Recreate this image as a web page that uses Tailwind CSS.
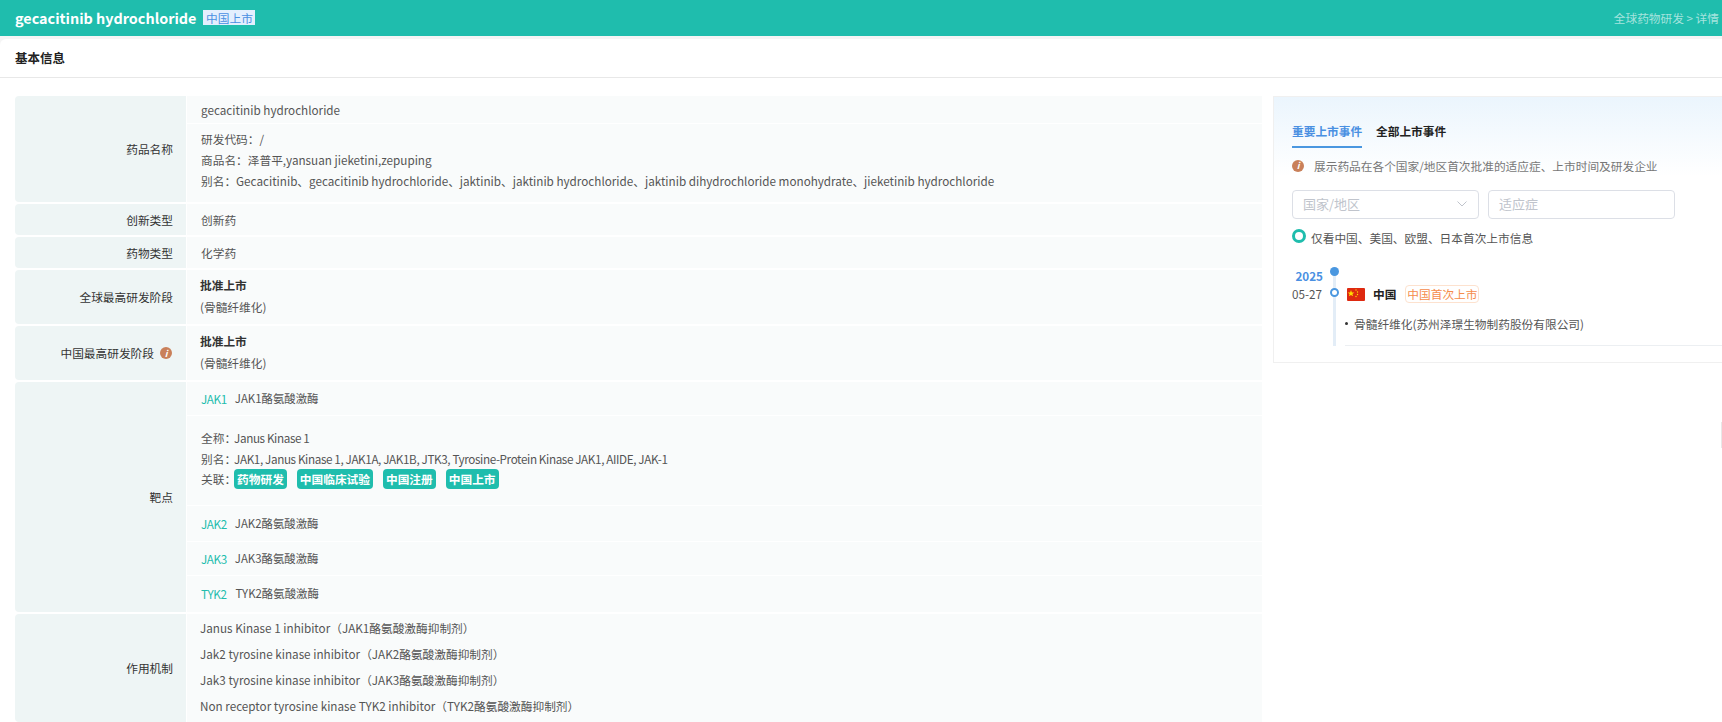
<!doctype html>
<html>

<head>
    <meta charset="UTF-8">
    <meta name="viewport" content="width=device-width, initial-scale=1.0">
    <script src="https://cdn.jsdelivr.net/npm/@tailwindcss/browser@4"></script>
</head>

<body class="relative h-[722px] overflow-hidden bg-[#f5f5f5] font-['Noto_Sans_CJK_SC','Noto_Sans',sans-serif] text-[11.7px] text-[#555]">
    <!-- top bar -->
    <header class="h-9 bg-[#1fbdad] flex items-center justify-between pl-[15px] pr-[3px]">
        <div class="flex items-center">
            <h1 class="text-[14.4px] font-bold text-white">gecacitinib hydrochloride</h1>
            <span class="ml-[7px] h-[15px] w-[52px] bg-[#e3effe] text-[#4a90e2] flex items-center justify-center leading-none">中国上市</span>
        </div>
        <div class="text-white/60">全球药物研发 &gt; 详情</div>
    </header>

    <main class="mt-[3px] h-[683px] bg-white rounded-tl-md overflow-hidden">
        <div class="h-[39px] border-b border-[#e8e8e8] pl-[15px] flex items-center text-[12.5px] font-bold text-[#222]">基本信息</div>

        <div class="flex pt-[18px] pl-[15px]">
            <!-- basic info table -->
            <div class="w-[1247px] flex flex-col gap-[2px]">
                <div class="flex h-[106px]">
                    <div class="w-[171px] bg-[#eef5f5] rounded-l flex items-center justify-end pr-[13px] text-[#333]">药品名称</div>
                    <div class="flex-1 bg-[#f9fbfb] ml-px">
                        <div class="h-7 border-b border-white pl-[14px] flex items-center">gecacitinib hydrochloride</div>
                        <div class="pl-[14px] pt-[4px] leading-[21px]">
                            <p>研发代码：/</p>
                            <p>商品名：泽普平,yansuan jieketini,zepuping</p>
                            <p>别名：Gecacitinib、gecacitinib hydrochloride、jaktinib、jaktinib hydrochloride、jaktinib dihydrochloride monohydrate、jieketinib hydrochloride</p>
                        </div>
                    </div>
                </div>
                <div class="flex h-[31px]">
                    <div class="w-[171px] bg-[#eef5f5] rounded-l flex items-center justify-end pr-[13px] text-[#333]">创新类型</div>
                    <div class="flex-1 bg-[#f9fbfb] ml-px pl-[14px] flex items-center">创新药</div>
                </div>
                <div class="flex h-[31px]">
                    <div class="w-[171px] bg-[#eef5f5] rounded-l flex items-center justify-end pr-[13px] text-[#333]">药物类型</div>
                    <div class="flex-1 bg-[#f9fbfb] ml-px pl-[14px] flex items-center">化学药</div>
                </div>
                <div class="flex h-[54px]">
                    <div class="w-[171px] bg-[#eef5f5] rounded-l flex items-center justify-end pr-[13px] text-[#333]">全球最高研发阶段</div>
                    <div class="flex-1 bg-[#f9fbfb] ml-px pl-[13px] pb-[2px] flex flex-col justify-center leading-[22px]">
                        <p class="font-bold text-[#333]">批准上市</p>
                        <p>(骨髓纤维化)</p>
                    </div>
                </div>
                <div class="flex h-[54px]">
                    <div class="w-[171px] bg-[#eef5f5] rounded-l flex items-center justify-end pr-[14px] text-[#333]">
                        中国最高研发阶段
                        <span class="ml-[6px] w-3 h-3 rounded-full bg-[#c9805a] text-white text-[9px] italic font-bold flex items-center justify-center leading-none">i</span>
                    </div>
                    <div class="flex-1 bg-[#f9fbfb] ml-px pl-[13px] pb-[2px] flex flex-col justify-center leading-[22px]">
                        <p class="font-bold text-[#333]">批准上市</p>
                        <p>(骨髓纤维化)</p>
                    </div>
                </div>
                <div class="flex h-[230px]">
                    <div class="w-[171px] bg-[#eef5f5] rounded-l flex items-center justify-end pr-[13px] text-[#333]">靶点</div>
                    <div class="flex-1 bg-[#f9fbfb] ml-px flex flex-col">
                        <div class="h-[34px] pt-px flex items-center gap-[8px] pl-[14px] border-b border-white"><span class="text-[#1fbdad] tracking-[-0.4px]">JAK1</span><span class="text-[11.4px]">JAK1酪氨酸激酶</span></div>
                        <div class="h-[90px] pl-[14px] border-b border-white pt-[11px]">
                            <p class="leading-[21px]">全称：<span class="-ml-[2px] tracking-[-0.38px]">Janus Kinase 1</span></p>
                            <p class="leading-[21px]">别名：<span class="-ml-[2px] tracking-[-0.38px]">JAK1, Janus Kinase 1, JAK1A, JAK1B, JTK3, Tyrosine-Protein Kinase JAK1, AIIDE, JAK-1</span></p>
                            <div class="flex items-center">
                                <span>关联：</span>
                                <div class="flex gap-[10px] -ml-[2px]">
                                    <span class="h-5 px-[3px] rounded bg-[#1fbdad] text-white font-bold flex items-center">药物研发</span>
                                    <span class="h-5 px-[3px] rounded bg-[#1fbdad] text-white font-bold flex items-center">中国临床试验</span>
                                    <span class="h-5 px-[3px] rounded bg-[#1fbdad] text-white font-bold flex items-center">中国注册</span>
                                    <span class="h-5 px-[3px] rounded bg-[#1fbdad] text-white font-bold flex items-center">中国上市</span>
                                </div>
                            </div>
                        </div>
                        <div class="h-9 flex items-center gap-[8px] pl-[14px] border-b border-white"><span class="text-[#1fbdad] tracking-[-0.4px]">JAK2</span><span class="text-[11.4px]">JAK2酪氨酸激酶</span></div>
                        <div class="h-[34px] flex items-center gap-[8px] pl-[14px] border-b border-white"><span class="text-[#1fbdad] tracking-[-0.4px]">JAK3</span><span class="text-[11.4px]">JAK3酪氨酸激酶</span></div>
                        <div class="flex-1 flex items-center gap-[9px] pl-[14px]"><span class="text-[#1fbdad] tracking-[-0.4px]">TYK2</span><span class="text-[11.4px]">TYK2酪氨酸激酶</span></div>
                    </div>
                </div>
                <div class="flex h-[108px]">
                    <div class="w-[171px] bg-[#eef5f5] rounded-l flex items-center justify-end pr-[13px] text-[#333]">作用机制</div>
                    <div class="flex-1 bg-[#f9fbfb] ml-px pl-[13px] pt-[1px] leading-[26px]">
                        <p>Janus Kinase 1 inhibitor（JAK1酪氨酸激酶抑制剂）</p>
                        <p>Jak2 tyrosine kinase inhibitor（JAK2酪氨酸激酶抑制剂）</p>
                        <p>Jak3 tyrosine kinase inhibitor（JAK3酪氨酸激酶抑制剂）</p>
                        <p>Non receptor tyrosine kinase TYK2 inhibitor（TYK2酪氨酸激酶抑制剂）</p>
                    </div>
                </div>
            </div>

            <!-- launch events panel -->
            <aside class="ml-[11px] w-[449px] shrink-0 h-[267px] border border-r-0 border-[#f0f0f0] bg-gradient-to-b from-[#ebf5fd] to-white to-[30%] pl-[18px]">
                <div class="flex gap-[14px] pt-[25px] font-bold">
                    <span class="h-[26px] w-[70px] border-b-2 border-[#4a97e0] text-[#4a90e2] whitespace-nowrap">重要上市事件</span>
                    <span class="h-[26px] text-[#222]">全部上市事件</span>
                </div>
                <div class="flex items-center mt-[9px] text-[#777]">
                    <span class="w-3 h-3 rounded-full bg-[#c9805a] text-white text-[9px] italic font-bold flex items-center justify-center leading-none">i</span>
                    <span class="ml-[10px]">展示药品在各个国家/地区首次批准的适应症、上市时间及研发企业</span>
                </div>
                <div class="flex gap-[9px] mt-[15px]">
                    <div class="w-[187px] h-[29px] border border-[#dcdfe6] rounded flex items-center justify-between pl-[10px] pr-[11px] text-[13px] text-[#c0c4cc]">
                        国家/地区
                        <svg width="10" height="6" viewBox="0 0 10 6" fill="none" stroke="#c0c4cc" stroke-width="1"><path d="M0.5 0.5 L5 5 L9.5 0.5"/></svg>
                    </div>
                    <div class="w-[187px] h-[29px] border border-[#dcdfe6] rounded flex items-center pl-[10px] text-[13px] text-[#c0c4cc]">适应症</div>
                </div>
                <div class="flex items-center mt-[10px]">
                    <span class="w-[14px] h-[14px] rounded-full border-[3px] border-[#1fbdad] bg-white -mt-[3px]"></span>
                    <span class="ml-[5px]">仅看中国、美国、欧盟、日本首次上市信息</span>
                </div>

                <!-- timeline -->
                <div class="flex mt-[21px]">
                    <div class="w-[31px] text-right shrink-0">
                        <p class="font-bold text-[#4a90e2] leading-[18px]">2025</p>
                        <p class="leading-[18px] mr-px">05-27</p>
                    </div>
                    <div class="relative w-[3px] h-[75px] ml-[10px] mt-[4px] bg-[#e3edf7] shrink-0">
                        <span class="absolute -left-[3px] -top-[4px] w-[9px] h-[9px] rounded-full bg-[#4a97e0]"></span>
                        <span class="absolute -left-[3px] top-[17px] w-[9px] h-[9px] rounded-full bg-white border-[2px] border-[#4a97e0]"></span>
                    </div>
                    <div class="flex-1 ml-[9px] pt-[18px]">
                        <div class="flex items-center">
                            <svg width="18" height="13" viewBox="0 0 18 13" class="ml-[2px] rounded-[1px]">
                                <rect width="18" height="13" fill="#de2910"/>
                                <polygon fill="#ffde00" points="4,2 4.9,4.4 7.4,4.4 5.4,5.9 6.1,8.3 4,6.9 1.9,8.3 2.6,5.9 0.6,4.4 3.1,4.4"/>
                                <circle cx="9" cy="2" r="0.7" fill="#ffde00"/>
                                <circle cx="10.5" cy="4" r="0.7" fill="#ffde00"/>
                                <circle cx="10.5" cy="6.5" r="0.7" fill="#ffde00"/>
                                <circle cx="9" cy="8.5" r="0.7" fill="#ffde00"/>
                            </svg>
                            <span class="ml-[8px] font-bold text-[#222]">中国</span>
                            <span class="ml-[9px] h-[18px] w-[74px] border border-[#fde2cf] rounded-sm text-[#f58c4b] flex items-center justify-center">中国首次上市</span>
                        </div>
                        <div class="flex items-center mt-[12px]">
                            <span class="w-[3px] h-[3px] rounded-full bg-[#333]"></span>
                            <span class="ml-[6px]">骨髓纤维化(苏州泽璟生物制药股份有限公司)</span>
                        </div>
                        <div class="mt-[12px] border-b border-[#eceff2]"></div>
                    </div>
                </div>
            </aside>
        </div>
    </main>
    <!-- scrollbar sliver at the window edge -->
    <div class="absolute right-0 top-[422px] w-px h-[26px] bg-[#e8e8e8]"></div>
</body>

</html>
